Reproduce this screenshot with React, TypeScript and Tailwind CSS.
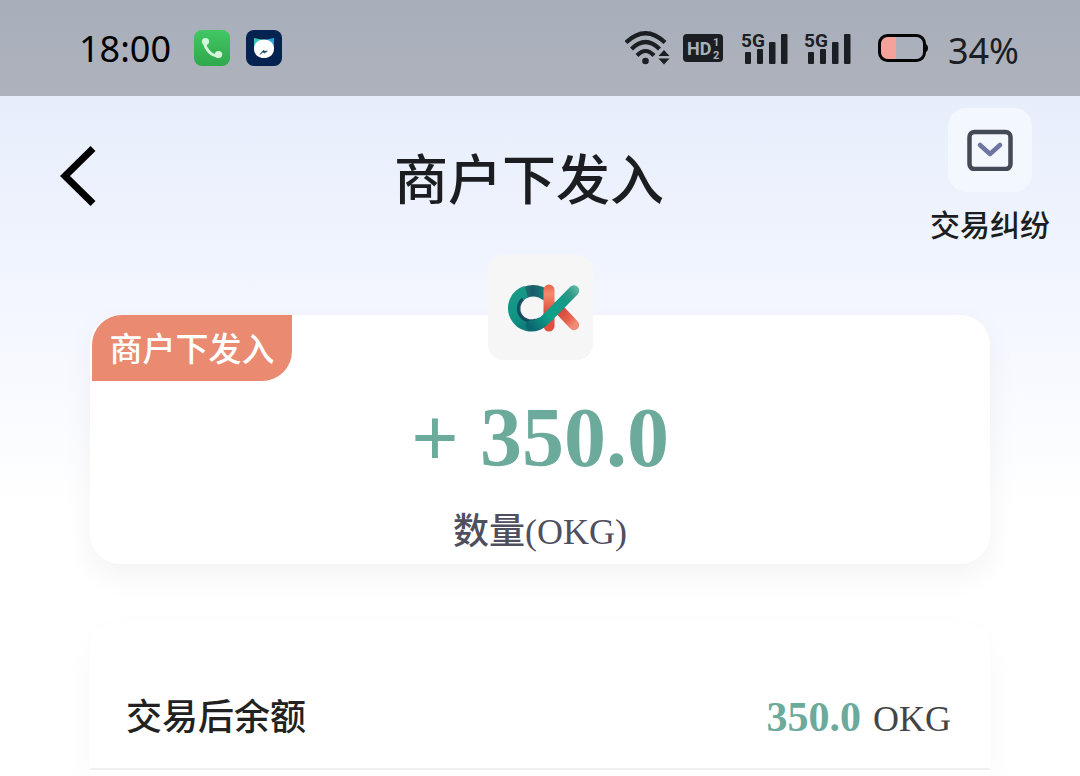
import React from "react";

function PhoneAppIcon() {
  return (
    <svg className="size-9" viewBox="0 0 36 36" aria-hidden="true">
      <defs>
        <linearGradient id="phoneBg" x1="0" y1="0" x2="0" y2="1">
          <stop offset="0" stopColor="#42c763" />
          <stop offset="1" stopColor="#2fa84c" />
        </linearGradient>
      </defs>
      <rect width="36" height="36" rx="8" fill="url(#phoneBg)" />
      <path d="M10.500 12C11 19 17 25.500 24 26" fill="none" stroke="#d5f5db" strokeWidth="3" />
      <ellipse cx="11.500" cy="11.600" rx="3.600" ry="3.500" fill="#d5f5db" />
      <ellipse cx="24.500" cy="24.600" rx="3.700" ry="3.500" fill="#d5f5db" />
    </svg>
  );
}

function CatAppIcon() {
  return (
    <svg className="size-9" viewBox="0 0 36 36" aria-hidden="true">
      <rect width="36" height="36" rx="8" fill="#052350" />
      <path d="M8 8l10 2-3 6-7 4z" fill="#35c9b2" />
      <path d="M28 8l-10 2 3 6 7 4z" fill="#2aa5dc" />
      <path d="M18 9.500c6 0 10 4 10 9.200 0 5.500-4 9.300-10 9.300S8 24.200 8 18.700c0-5.200 4-9.200 10-9.200z" fill="#fff" />
      <path d="M14 24.500l3-2.500 1.500 1 3-2-2.800.2-1.200-1-1.800 2z" fill="#0b3d63" stroke="#0b3d63" strokeWidth=".5" />
    </svg>
  );
}

function WifiIcon() {
  return (
    <svg className="h-[36px] w-[46px]" viewBox="0 0 46 36" aria-hidden="true">
      <g fill="none" stroke="#1b1e22" strokeWidth="4.200">
        <path d="M1 12.500Q20.500-6 40 12.500" />
        <path d="M6.500 19Q20.500 5 34.500 19" />
        <path d="M12 25.500Q20.500 16.500 29 25.500" />
      </g>
      <circle cx="20.500" cy="31" r="3.300" fill="#1b1e22" />
      <path d="M39 20l5.500 6h-11zM39 34.500l5.500-6h-11z" fill="#1b1e22" />
    </svg>
  );
}

function HdIcon() {
  return (
    <svg className="h-7 w-10" viewBox="0 0 40 28" role="img" aria-label="HD 1 2">
      <rect width="40" height="28" rx="4" fill="#1b1e22" />
      <g fill="#abb1bc" fontFamily="Roboto, sans-serif" fontWeight="700">
        <text x="4" y="21" fontSize="18">HD</text>
        <text x="30" y="12" fontSize="11">1</text>
        <text x="30" y="25" fontSize="11">2</text>
      </g>
    </svg>
  );
}

function SignalIcon() {
  return (
    <svg className="h-10 w-[48px]" viewBox="0 -3 48 40" role="img" aria-label="5G">
      <text x="0" y="15.500" fontSize="19" fontFamily="Roboto, sans-serif" fontWeight="700" fill="#1b1e22">5G</text>
      <g fill="#1b1e22">
        <rect x="4" y="21" width="6" height="12" rx="1" />
        <rect x="16" y="18" width="6" height="15" rx="1" />
        <rect x="28" y="11" width="6.500" height="22" rx="1" />
        <rect x="40" y="3" width="6.500" height="30" rx="1" />
      </g>
    </svg>
  );
}

function BatteryIcon() {
  return (
    <svg className="h-7 w-[50px]" viewBox="0 0 50 28" aria-hidden="true">
      <path d="M3 8a5 5 0 015-5h10v22H8a5 5 0 01-5-5z" fill="#f5a29b" />
      <rect x="1.500" y="1.500" width="45" height="25" rx="8" fill="none" stroke="#050505" strokeWidth="3" />
      <path d="M47 9.500q3 1 3 4.500t-3 4.500z" fill="#050505" />
    </svg>
  );
}

function OkLogo() {
  return (
    <svg className="h-[50px] w-[74px]" viewBox="0 0 74 50" role="img" aria-label="OK">
      <defs>
        <linearGradient id="ring" gradientUnits="userSpaceOnUse" x1="6" y1="6" x2="36" y2="46">
          <stop offset="0" stopColor="#1a9a88" />
          <stop offset=".5" stopColor="#119384" />
          <stop offset="1" stopColor="#0a6670" />
        </linearGradient>
        <linearGradient id="ringTop" gradientUnits="userSpaceOnUse" x1="12" y1="0" x2="38" y2="0">
          <stop offset="0" stopColor="#1a8f82" />
          <stop offset=".5" stopColor="#1c5a68" />
          <stop offset="1" stopColor="#0f8078" />
        </linearGradient>
        <linearGradient id="arm" gradientUnits="userSpaceOnUse" x1="24" y1="45" x2="70" y2="5">
          <stop offset="0" stopColor="#0a6670" />
          <stop offset=".35" stopColor="#10a18a" />
          <stop offset=".7" stopColor="#149a86" />
          <stop offset=".85" stopColor="#2d9885" />
          <stop offset="1" stopColor="#5cb8a4" />
        </linearGradient>
        <linearGradient id="stem" x1="0" y1="0" x2="0" y2="1">
          <stop offset="0" stopColor="#e9654f" />
          <stop offset=".2" stopColor="#f58a70" />
          <stop offset=".6" stopColor="#dc4d3c" />
          <stop offset="1" stopColor="#e0523e" />
        </linearGradient>
        <linearGradient id="leg" x1="0" y1="0" x2="1" y2="1">
          <stop offset="0" stopColor="#c93f36" />
          <stop offset=".7" stopColor="#e8634c" />
          <stop offset="1" stopColor="#ef8b78" />
        </linearGradient>
      </defs>
      <path d="M50 24L67 42" stroke="url(#leg)" strokeWidth="10.500" strokeLinecap="round" />
      <path d="M13 13C20 6 32 6 40 13" fill="none" stroke="url(#ringTop)" strokeWidth="11.500" />
      <rect x="36.500" y="1.500" width="11" height="47" rx="5.500" fill="url(#stem)" />
      <path d="M19 8.500A17.500 17.500 0 1 0 35 39" fill="none" stroke="url(#ring)" strokeWidth="11.500" />
      <path d="M16 16A12.500 12.500 0 0 0 29 37" fill="none" stroke="#103f5a" strokeWidth="3.500" opacity=".85" />
      <path d="M24 42.500C30 43 35 40 39 36L67 7.500" fill="none" stroke="url(#arm)" strokeWidth="10.500" strokeLinecap="round" />
    </svg>
  );
}

function StatusBar() {
  return (
    <div className="flex h-24 shrink-0 items-center justify-between bg-linear-to-b from-[#a8afba] to-[#aeb2bd] pr-[61px] pl-[79px] font-['Noto_Sans',sans-serif] text-[36px] leading-none text-black">
      <div className="flex items-center">
        <time className="pt-0.5">18:00</time>
        <div className="ml-[23px] flex gap-4">
          <PhoneAppIcon />
          <CatAppIcon />
        </div>
      </div>
      <div className="flex items-center">
        <WifiIcon />
        <div className="ml-3"><HdIcon /></div>
        <div className="ml-[18px] flex gap-[15px]">
          <SignalIcon />
          <SignalIcon />
        </div>
        <div className="ml-[26px]"><BatteryIcon /></div>
        <span className="ml-5 pt-1.5 text-[#1b1e22]">34%</span>
      </div>
    </div>
  );
}

function Header() {
  return (
    <header className="grid h-[219px] shrink-0 grid-cols-[158px_1fr_180px] items-start">
      <button type="button" aria-label="返回" className="mt-[50px] ml-[60px] w-9">
        <svg className="h-[60px] w-9" viewBox="0 0 36 60" fill="none" aria-hidden="true">
          <path d="M33 2.500L5 30L33 57.500" stroke="#000" strokeWidth="7" />
        </svg>
      </button>
      <h1 className="mt-14 text-center text-[54px] leading-[60px] font-medium text-[#1b1d21]">商户下发入</h1>
      <button type="button" className="mt-3 flex flex-col items-center gap-[18px]">
        <span className="flex size-[84px] items-center justify-center rounded-[18px] bg-[#f3f7fe]">
          <svg className="h-[42px] w-[46px]" viewBox="0 0 46 42" fill="none" aria-hidden="true">
            <rect x="2.500" y="3" width="41" height="37" rx="5" stroke="#454a57" strokeWidth="4.500" />
            <path d="M13 16L23 25L33 16" stroke="#6d75a0" strokeWidth="4.500" strokeLinecap="round" strokeLinejoin="round" />
          </svg>
        </span>
        <span className="text-[30px] leading-8 font-medium text-[#1b1d21]">交易纠纷</span>
      </button>
    </header>
  );
}

export default function App() {
  return (
    <div className="flex min-h-screen flex-col bg-white font-['Liberation_Serif','Noto_Sans_CJK_SC',serif]">
      <StatusBar />
      <main className="flex grow flex-col bg-[linear-gradient(180deg,#e7eefb_0px,#f0f4fe_160px,#ffffff_410px)]">
        <Header />
        <section className="relative mx-[90px] flex flex-col items-center rounded-[30px] bg-white pb-3 shadow-[0_12px_30px_rgba(0,0,0,0.05)]">
          <div className="absolute -top-[60px] flex size-[105px] items-center justify-center rounded-[16px] bg-[#f6f6f6] pl-2">
            <OkLogo />
          </div>
          <span className="ml-0.5 flex h-[66px] w-[200px] items-center justify-center self-start rounded-tl-[30px] rounded-br-[30px] bg-[#e98a71] pt-1 text-[33px] leading-9 font-medium text-white">
            商户下发入
          </span>
          <p className="mt-3 text-[84px] leading-[90px] font-bold text-[#6caa9c]">+ 350.0</p>
          <p className="mt-[29px] text-[36px] leading-10 font-medium text-[#4f4f60]">数量(OKG)</p>
        </section>
        <section className="mx-[90px] mt-[57px] grow rounded-t-[30px] bg-white shadow-[0_12px_30px_rgba(0,0,0,0.03)]">
          <dl className="flex items-center justify-between border-b-2 border-[#f0f0f0] pt-[72px] pr-[39px] pb-[25px] pl-9 leading-[48px]">
            <dt className="text-[36px] font-medium text-[#222222]">交易后余额</dt>
            <dd className="flex items-baseline gap-3 text-[36px] text-[#444444]">
              <span className="text-[42px] font-bold text-[#6caa9c]">350.0</span>
              <span>OKG</span>
            </dd>
          </dl>
        </section>
      </main>
    </div>
  );
}
